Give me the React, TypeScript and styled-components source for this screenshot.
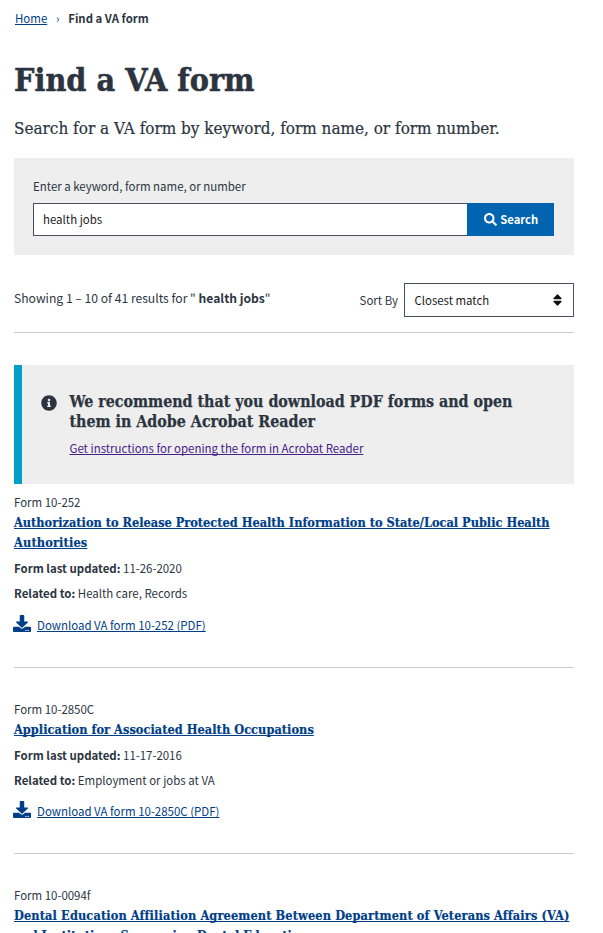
import React from "react";
import styled, { createGlobalStyle, css } from "styled-components";
import { FaDownload, FaInfoCircle, FaSearch } from "react-icons/fa";

const sans = '"Noto Sans CJK SC", "Open Sans", sans-serif';
const serif = '"DejaVu Serif Condensed", "DejaVu Serif", serif';
const ink = "#2c353f";
const link = "#003e88";

const GlobalStyle = createGlobalStyle`
  *, *::before, *::after { box-sizing: border-box; }
  html, body { margin: 0; padding: 0; background: #fff; }
  body { height: 933px; overflow: hidden; }
`;

const Page = styled.main`
  width: 603px;
  height: 933px;
  overflow: hidden;
  padding: 8px 29px 0 14px;
  color: ${ink};
  font-family: ${sans};
  font-size: 11.46px;
  line-height: 20px;
`;

const underline = css`
  text-decoration: underline;
  text-decoration-thickness: 1px;
  text-underline-offset: 1px;
  text-decoration-skip-ink: none;
`;

const Link = styled.a<{ $visited?: boolean }>`
  color: ${(p) => (p.$visited ? "#47208a" : link)};
  ${underline}
`;

const Breadcrumbs = styled.nav`
  display: flex;
  padding-left: 1px;
`;

const Chevron = styled.span`
  width: 21px;
  text-align: center;
  color: ${link};
`;

const CurrentPage = styled.strong`
  font-size: 11.38px;
`;

const Heading = styled.h1`
  margin: 32px 0 0;
  font: 700 32px/40px ${serif};
  -webkit-text-stroke: 0.5px ${ink};
`;

const Intro = styled.p`
  margin: 15px 0 0;
  font: 400 16.97px/26px ${serif};
  -webkit-text-stroke: 0.2px ${ink};
  white-space: nowrap;
`;

const SearchPanel = styled.form`
  height: 97px;
  margin-top: 17px;
  padding: 18px 20px 0 19px;
  background: #eee;
`;

const SearchLabel = styled.label`
  display: block;
`;

const SearchRow = styled.div`
  display: flex;
  height: 33px;
  margin-top: 7px;
`;

const SearchInput = styled.input`
  flex: 1;
  min-width: 0;
  padding: 0 9px 1px;
  border: 1px solid #494f5c;
  border-right: 0;
  border-radius: 0;
  background: #fff;
  color: #1b1b1b;
  font: 400 11.46px/20px ${sans};
  outline: 0;
`;

const SearchButton = styled.button`
  display: flex;
  align-items: center;
  justify-content: center;
  gap: 3.5px;
  width: 87px;
  padding: 0 0 1px 1px;
  border: 0;
  background: #0064b1;
  color: #fff;
  font: 700 11.27px/20px ${sans};
`;

const Toolbar = styled.div`
  display: flex;
  justify-content: space-between;
  height: 50px;
  margin-top: 28px;
  border-bottom: 1px solid #ccc;
`;

const Summary = styled.p`
  margin: 5px 0 0;
  font-size: 12.13px;
`;

const Sort = styled.div`
  display: flex;
  align-items: center;
  gap: 6px;
  height: 34px;
`;

const SortSelect = styled.div`
  display: flex;
  align-items: center;
  justify-content: space-between;
  width: 170px;
  height: 34px;
  padding: 0 11px 0 9.5px;
  border: 1px solid #494f5c;
  color: #1b1b1b;
  font-size: 11.4px;
`;

const Alert = styled.section`
  display: flex;
  height: 119px;
  margin-top: 32px;
  padding: 27px 40px 0 19px;
  border-left: 8px solid #009fca;
  background: #eee;
`;

const AlertIcon = styled(FaInfoCircle)`
  flex: none;
  width: 16px;
  height: 16px;
  margin: 3px 13px 0 -0.5px;
`;

const AlertTitle = styled.h2`
  margin: 0 0 6px;
  font: 700 15.85px/20px ${serif};
  -webkit-text-stroke: 0.25px ${ink};
  white-space: nowrap;
`;

const Results = styled.ul`
  margin: 8px 0 0;
  padding: 0;
  list-style: none;
`;

const Result = styled.li`
  height: 186px;
  margin-bottom: 0;
  border-bottom: 0;

  &:first-child {
    height: 206.5px;
  }
`;

const ResultTitle = styled.h3`
  margin: 1px 0 5px;
  font: 700 12.65px/20px ${serif};
  -webkit-text-stroke: 0.2px ${link};
  white-space: nowrap;
`;

const TitleLine = styled.span<{ $tracking: number }>`
  letter-spacing: ${(p) => p.$tracking}px;
`;

const Detail = styled.p`
  margin: 0 0 5.4px;
`;

const Download = styled.div`
  display: flex;
  align-items: center;
  gap: 6px;
  height: 20px;
  margin-top: 11.4px;
`;

const DownloadIcon = styled(FaDownload)`
  width: 18px;
  height: 17px;
  margin: -3px 0 0 -1px;
  color: ${link};
`;

const Rule = styled.hr`
  height: 1px;
  margin: 32px 0 0;
  border: 0;
  background: #ccc;
`;

type Line = { text: string; tracking: number };
type Form = { id: string; title: Line[]; updated?: string; related?: string };

const forms: Form[] = [
  {
    id: "10-252",
    title: [
      {
        text: "Authorization to Release Protected Health Information to State/Local Public Health",
        tracking: 0,
      },
      { text: "Authorities", tracking: 0.15 },
    ],
    updated: "11-26-2020",
    related: "Health care, Records",
  },
  {
    id: "10-2850C",
    title: [{ text: "Application for Associated Health Occupations", tracking: 0.04 }],
    updated: "11-17-2016",
    related: "Employment or jobs at VA",
  },
  {
    id: "10-0094f",
    title: [
      {
        text: "Dental Education Affiliation Agreement Between Department of Veterans Affairs (VA)",
        tracking: 0.12,
      },
      { text: "and Institutions Sponsoring Dental Education", tracking: 0 },
    ],
  },
];

function FormResult({ form }: { form: Form }) {
  return (
    <Result>
      <div>Form {form.id}</div>
      <ResultTitle>
        <Link>
          {form.title.map((line, i) => (
            <React.Fragment key={line.text}>
              {i > 0 && <br />}
              <TitleLine $tracking={line.tracking}>{line.text}</TitleLine>
            </React.Fragment>
          ))}
        </Link>
      </ResultTitle>
      {form.updated && (
        <>
          <Detail>
            <strong>Form last updated:</strong> {form.updated}
          </Detail>
          <Detail>
            <strong>Related to:</strong> {form.related}
          </Detail>
          <Download>
            <DownloadIcon preserveAspectRatio="none" />
            <Link>Download VA form {form.id} (PDF)</Link>
          </Download>
          <Rule />
        </>
      )}
    </Result>
  );
}

export default function App() {
  return (
    <>
      <GlobalStyle />
      <Page>
        <Breadcrumbs>
          <Link>Home</Link>
          <Chevron>›</Chevron>
          <CurrentPage>Find a VA form</CurrentPage>
        </Breadcrumbs>
        <Heading>Find a VA form</Heading>
        <Intro>Search for a VA form by keyword, form name, or form number.</Intro>
        <SearchPanel>
          <SearchLabel htmlFor="q">Enter a keyword, form name, or number</SearchLabel>
          <SearchRow>
            <SearchInput id="q" defaultValue="health jobs" />
            <SearchButton type="button">
              <FaSearch size={13} />
              Search
            </SearchButton>
          </SearchRow>
        </SearchPanel>
        <Toolbar>
          <Summary>
            Showing 1 – 10 of 41 results for " <strong>health jobs</strong>"
          </Summary>
          <Sort>
            Sort By
            <SortSelect>
              Closest match
              <svg width="9" height="12" viewBox="0 0 9 12">
                <path d="M4.5 0.3 8.3 4.2Q8.6 5 7.8 5H1.2Q.4 5 .7 4.2ZM4.5 11.7.7 7.8Q.4 7 1.2 7H7.8Q8.6 7 8.3 7.8Z" fill="#111" stroke="#111" strokeWidth="0.5" />
              </svg>
            </SortSelect>
          </Sort>
        </Toolbar>
        <Alert>
          <AlertIcon />
          <div>
            <AlertTitle>
              We recommend that you download PDF forms and open
              <br />
              them in Adobe Acrobat Reader
            </AlertTitle>
            <Link $visited>Get instructions for opening the form in Acrobat Reader</Link>
          </div>
        </Alert>
        <Results>
          {forms.map((form) => (
            <FormResult key={form.id} form={form} />
          ))}
        </Results>
      </Page>
    </>
  );
}
